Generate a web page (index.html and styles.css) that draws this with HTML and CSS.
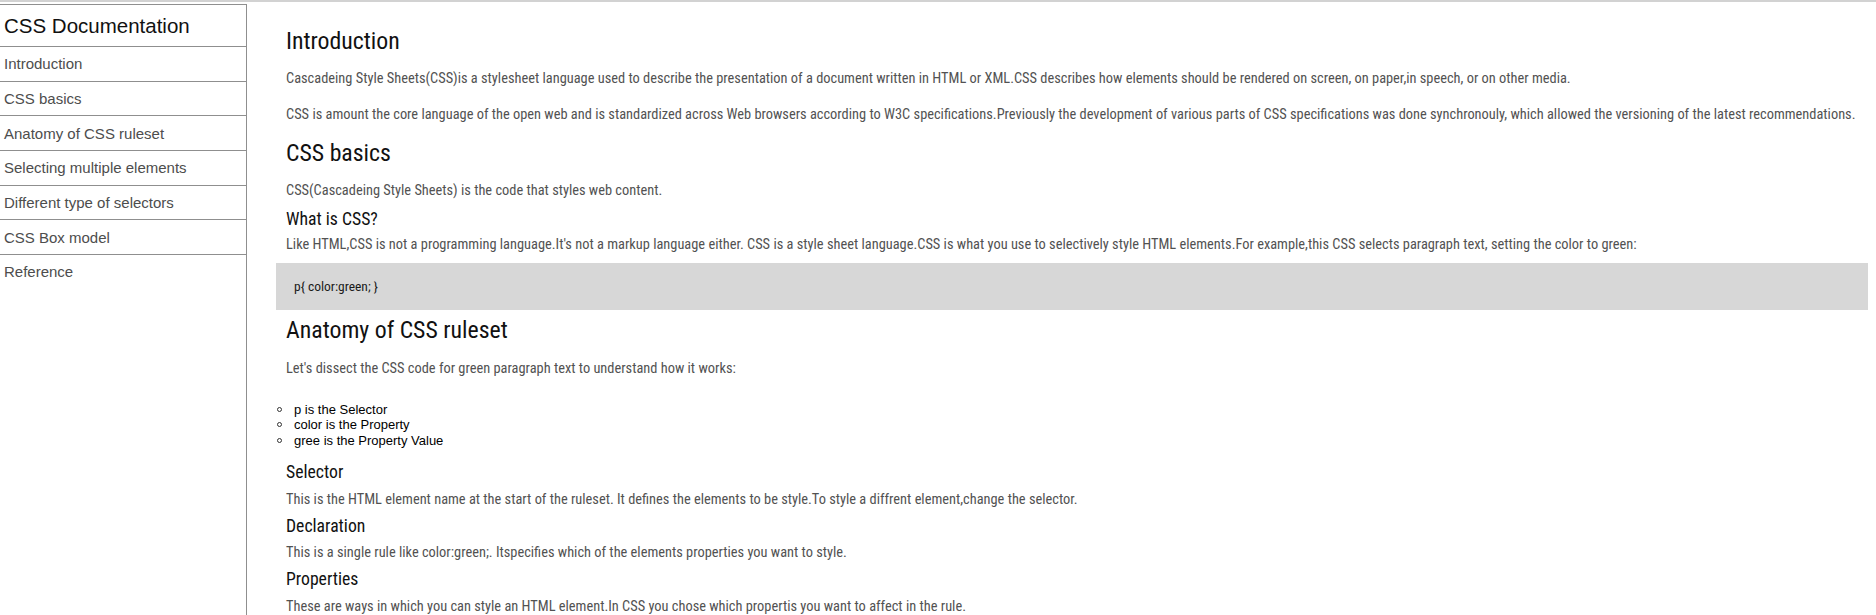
FILE: index.html
```html
<!DOCTYPE html>
<html lang="en">
<head>
<meta charset="utf-8">
<title>CSS Documentation</title>
<link rel="stylesheet" href="styles.css">
</head>
<body>
<div class="page">
  <nav class="nav">
    <header class="nav-title">CSS Documentation</header>
    <ul class="nav-list">
      <li class="nav-item"><a class="nav-link" href="#introduction">Introduction</a></li>
      <li class="nav-item"><a class="nav-link" href="#css_basics">CSS basics</a></li>
      <li class="nav-item"><a class="nav-link" href="#anatomy">Anatomy of CSS ruleset</a></li>
      <li class="nav-item"><a class="nav-link" href="#selecting">Selecting multiple elements</a></li>
      <li class="nav-item"><a class="nav-link" href="#types">Different type of selectors</a></li>
      <li class="nav-item"><a class="nav-link" href="#box">CSS Box model</a></li>
      <li class="nav-item nav-item-last"><a class="nav-link" href="#reference">Reference</a></li>
    </ul>
  </nav>
  <main class="main">
    <h2 class="h2 h2-first" id="introduction">Introduction</h2>
    <p class="p p-after-h2">Cascadeing Style Sheets(CSS)is a stylesheet language used to describe the presentation of a document written in HTML or XML.CSS describes how elements should be rendered on screen, on paper,in speech, or on other media.</p>
    <p class="p p-after-p">CSS is amount the core language of the open web and is standardized across Web browsers according to W3C specifications.Previously the development of various parts of CSS specifications was done synchronouly, which allowed the versioning of the latest recommendations.</p>

    <h2 class="h2" id="css_basics">CSS basics</h2>
    <p class="p p-after-h2">CSS(Cascadeing Style Sheets) is the code that styles web content.</p>
    <h3 class="h3 h3-what">What is CSS?</h3>
    <p class="p p-like">Like HTML,CSS is not a programming language.It's not a markup language either. CSS is a style sheet language.CSS is what you use to selectively style HTML elements.For example,this CSS selects paragraph text, setting the color to green:</p>
    <div class="code">p{ color:green; }</div>

    <h2 class="h2 h2-after-code" id="anatomy">Anatomy of CSS ruleset</h2>
    <p class="p p-after-h2 p-dissect">Let's dissect the CSS code for green paragraph text to understand how it works:</p>
    <ul class="list">
      <li class="list-item">p is the Selector</li>
      <li class="list-item">color is the Property</li>
      <li class="list-item">gree is the Property Value</li>
    </ul>
    <h3 class="h3 h3-after-list">Selector</h3>
    <p class="p p-after-h3">This is the HTML element name at the start of the ruleset. It defines the elements to be style.To style a diffrent element,change the selector.</p>
    <h3 class="h3 h3-after-p">Declaration</h3>
    <p class="p p-after-h3">This is a single rule like color:green;. Itspecifies which of the elements properties you want to style.</p>
    <h3 class="h3 h3-after-p">Properties</h3>
    <p class="p p-after-h3">These are ways in which you can style an HTML element.In CSS you chose which propertis you want to affect in the rule.</p>
  </main>
</div>
</body>
</html>
```

FILE: styles.css
```css
html, body {
  margin: 0;
  padding: 0;
  background: #ffffff;
}

body {
  border-top: 2px solid #d2d2d2;
  font-family: "Liberation Sans", Arial, sans-serif;
}

.page {
  display: flex;
  align-items: stretch;
  min-height: calc(100vh - 2px);
}

/* ---------- sidebar ---------- */
.nav {
  flex: 0 0 246px;
  margin-top: 2px;
  border-top: 1px solid #8f8f8f;
  border-right: 1px solid #8f8f8f;
  display: flex;
  flex-direction: column;
}

.nav-title {
  height: 41px;
  line-height: 42px;
  padding-left: 4px;
  font-size: 20.5px;
  color: #111111;
  border-bottom: 1px solid #8f8f8f;
}

.nav-list {
  list-style: none;
  margin: 0;
  padding: 0;
  display: flex;
  flex-direction: column;
}

.nav-item {
  height: 33.67px;
  border-bottom: 1px solid #8f8f8f;
  display: flex;
  align-items: center;
}

.nav-item-last {
  border-bottom: none;
}

.nav-link {
  padding-left: 4px;
  font-size: 15px;
  color: #4d4d4d;
  text-decoration: none;
}

/* ---------- main ---------- */
.main {
  flex: 1 1 auto;
  min-width: 0;
  padding: 0 8px 0 29px;
  display: flex;
  flex-direction: column;
  font-family: Roboto, "Liberation Sans", Arial, sans-serif;
  font-stretch: condensed;
}

.h2 {
  margin: 13px 0 0 10px;
  font-size: 23.8px;
  line-height: 30px;
  font-weight: normal;
  color: #111111;
}

.h2-first {
  margin-top: 23.7px;
}

.h2-after-code {
  margin-top: 5px;
}

.h3 {
  margin: 5px 0 0 10px;
  font-size: 17.7px;
  line-height: 22px;
  font-weight: normal;
  color: #111111;
}

.h3-what {
  margin-top: 7.3px;
}

.h3-after-p {
  margin-top: 5px;
}

.h3-after-list {
  margin-top: 13px;
}

.p {
  margin: 0 -6px 0 10px;
  font-size: 14.4px;
  line-height: 20px;
  color: #525252;
}

.p-after-h2 {
  margin-top: 13px;
}

.p-dissect {
  margin-top: 14.3px;
}

.p-after-p {
  margin-top: 16px;
}

.p-after-h3 {
  margin-top: 6.8px;
}

.p-like {
  margin-top: 5.4px;
}

.code {
  margin-top: 7.2px;
  height: 47px;
  line-height: 47px;
  padding-left: 18px;
  background: #d7d7d7;
  font-size: 13.5px;
  color: #1a1a1a;
}

.list {
  list-style: none;
  margin: 23px 0 0 0;
  padding: 0;
  display: flex;
  flex-direction: column;
  font-family: "Liberation Sans", Arial, sans-serif;
  font-stretch: normal;
}

.list-item {
  display: flex;
  align-items: center;
  gap: 12px;
  height: 15.3px;
  font-size: 13px;
  color: #000000;
}

.list-item::before {
  content: "";
  flex: 0 0 auto;
  width: 3px;
  height: 3px;
  margin-left: 1px;
  border: 1px solid #333333;
  border-radius: 50%;
}
```
